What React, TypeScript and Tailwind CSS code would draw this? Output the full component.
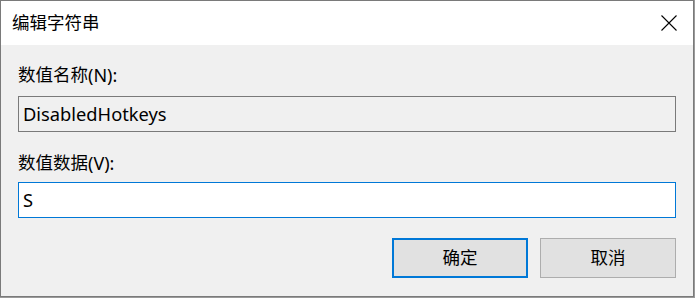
import React from "react";

const font = { fontFamily: '"Segoe UI", "Noto Sans", "Noto Sans CJK SC", sans-serif' };

export default function App() {
  return (
    <div className="w-[695px] h-[298px] bg-[#9a9a9a]" style={font}>
      <div className="w-[694px] h-[297px] border border-[#7a7a7a] bg-[#f0f0f0] flex flex-col">
        <div className="h-[44px] bg-white flex items-center justify-between pl-[11px] pr-[16px] shrink-0">
          <span className="text-[17.5px] text-black leading-none">编辑字符串</span>
          <svg width="16" height="16" viewBox="0 0 16 16" className="block">
            <path d="M0.5 0.5 L15.5 15.5 M15.5 0.5 L0.5 15.5" stroke="#000" strokeWidth="1.1" fill="none" />
          </svg>
        </div>
        <div className="flex flex-col px-[17px]">
          <div className="mt-[19px] h-[22px] flex items-center text-[17.5px] text-black leading-none">
            数值名称<span className="text-[18px]">(N):</span>
          </div>
          <div className="mt-[10px] h-[36px] border border-[#7a7a7a] bg-[#f0f0f0] flex items-center px-[4px] text-[18.3px] text-black leading-none">
            DisabledHotkeys
          </div>
          <div className="mt-[20px] h-[22px] flex items-center text-[17.5px] text-black leading-none">
            数值数据<span className="text-[18px]">(V):</span>
          </div>
          <div className="mt-[8px] h-[36px] border border-[#0078d7] bg-white flex items-center px-[4px] text-[18.3px] text-black leading-none">
            S
          </div>
          <div className="mt-[20px] flex justify-end gap-[12px]">
            <button className="w-[136px] h-[40px] border-2 border-[#0078d7] bg-[#e1e1e1] text-[17.5px] text-black leading-none flex items-center justify-center">
              确定
            </button>
            <button className="w-[136px] h-[40px] border border-[#adadad] bg-[#e1e1e1] text-[17.5px] text-black leading-none flex items-center justify-center">
              取消
            </button>
          </div>
        </div>
      </div>
    </div>
  );
}
